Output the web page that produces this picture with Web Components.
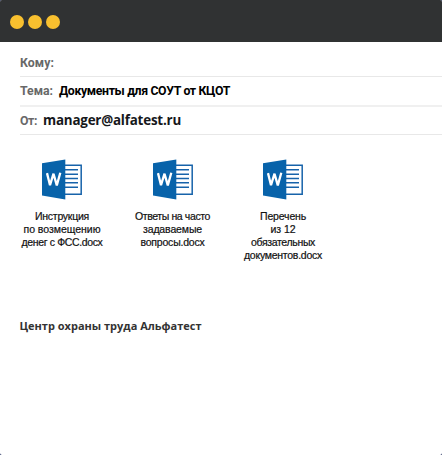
<!DOCTYPE html>
<html lang="ru">
<head>
<meta charset="utf-8">
<title>Письмо</title>
<style>
html,body{margin:0;padding:0;background:#1d2b5c}
body{width:442px;height:455px;overflow:hidden}
</style>
</head>
<body>
<mail-window>
  <mail-field label="Кому:" label-width="34" first></mail-field>
  <mail-field label="Тема:" label-width="33" rule="2"><fit-text width="171">Документы для СОУТ от КЦОТ</fit-text></mail-field>
  <mail-field label="От:" label-width="17" sender><fit-text width="138">manager@alfatest.ru</fit-text></mail-field>
  <file-list slot="body">
    <doc-file><fit-text width="54">Инструкция</fit-text><fit-text width="77">по возмещению</fit-text><fit-text width="81">денег с ФСС.docx</fit-text></doc-file>
    <doc-file><fit-text width="75">Ответы на часто</fit-text><fit-text width="59">задаваемые</fit-text><fit-text width="64">вопросы.docx</fit-text></doc-file>
    <doc-file><fit-text width="46">Перечень</fit-text><fit-text width="25">из 12</fit-text><fit-text width="64">обязательных</fit-text><fit-text width="78">документов.docx</fit-text></doc-file>
  </file-list>
  <mail-signature slot="body"><fit-text width="182">Центр охраны труда Альфатест</fit-text></mail-signature>
</mail-window>
<script>
function define(name, html, setup) {
  customElements.define(name, class extends HTMLElement {
    connectedCallback() {
      if (this.shadowRoot) return;
      this.attachShadow({mode: 'open'}).innerHTML = html;
      if (setup) setup(this, this.shadowRoot);
    }
  });
}
define('mail-window', `<style>
:host{display:flex;flex-direction:column;width:442px;height:455px;background:#fff;border-radius:2px;overflow:hidden}
header{box-sizing:border-box;height:42px;flex:none;background:#303233;display:flex;gap:4px;padding:15px 10px}
i{width:14px;height:14px;border-radius:50%;background:#f8c02f}
section{padding:6px 0 0 20px}
</style><header><i></i><i></i><i></i></header><section><slot></slot></section><slot name="body"></slot>`);

define('mail-field', `<style>
:host{display:flex;box-sizing:border-box;height:29px;gap:6px;border-bottom:1px solid #e8e8e8;font:700 12.3px/29px Roboto,sans-serif;color:#000}
:host([first]){line-height:31px}
:host([rule="2"]){height:30px;border-bottom:2px solid #f0f0f0}
:host([sender]){height:28px;line-height:28px}
fit-text{color:#686868}
:host([sender]) div{font:700 13.4px/27px "Open Sans",sans-serif;color:#16181b}
</style><fit-text></fit-text><div><slot></slot></div>`, (el, root) => {
  const t = root.querySelector('fit-text');
  t.setAttribute('width', el.getAttribute('label-width'));
  t.textContent = el.getAttribute('label');
});

define('file-list', `<style>
:host{display:flex;gap:10.5px;padding:24px 0 0 12px;height:159px}
</style><slot></slot>`);

define('doc-file', `<style>
:host{display:flex;flex-direction:column;align-items:center;width:100px;flex:none;font:400 10.5px/13px "Liberation Sans",sans-serif;color:#111;-webkit-text-stroke:.2px #111}
svg{width:40px;height:42px;margin-bottom:9px}
</style><svg viewBox="0 0 40 42">
<path d="M22 6.2H39.2V35.2H22Z" fill="#fff" stroke="#1763aa" stroke-width="1.5"/>
<path d="M22 10.7H36M22 15.2H36M22 19.5H36M22 23.8H36M22 28.2H36" stroke="#1763aa" stroke-width="1.5"/>
<path d="M0 4.3L23.3 .4V40.6L0 36.5Z" fill="#0863aa"/>
<path d="M5 14.1L8 26.2L11.5 14.7L14.8 26.4L18.3 13.7" fill="none" stroke="#fff" stroke-width="2.3" stroke-linejoin="miter" stroke-miterlimit="2"/>
</svg><slot></slot>`);

define('mail-signature', `<style>
:host{display:block;padding:0 0 0 19.5px;font:700 11px/15px "Open Sans",sans-serif;color:#333}
</style><slot></slot>`);

/* A single line whose tracking is adjusted to span the given width. */
define('fit-text', `<style>
:host{display:block;white-space:nowrap;width:max-content}
span{display:inline-block}
</style><span><slot></slot></span>`, (el, root) => {
  requestAnimationFrame(() => {
    const s = root.querySelector('span');
    const n = el.textContent.length;
    const w = +el.getAttribute('width');
    s.style.letterSpacing = (w - s.getBoundingClientRect().width) / n + 'px';
  });
});
</script>
</body>
</html>
